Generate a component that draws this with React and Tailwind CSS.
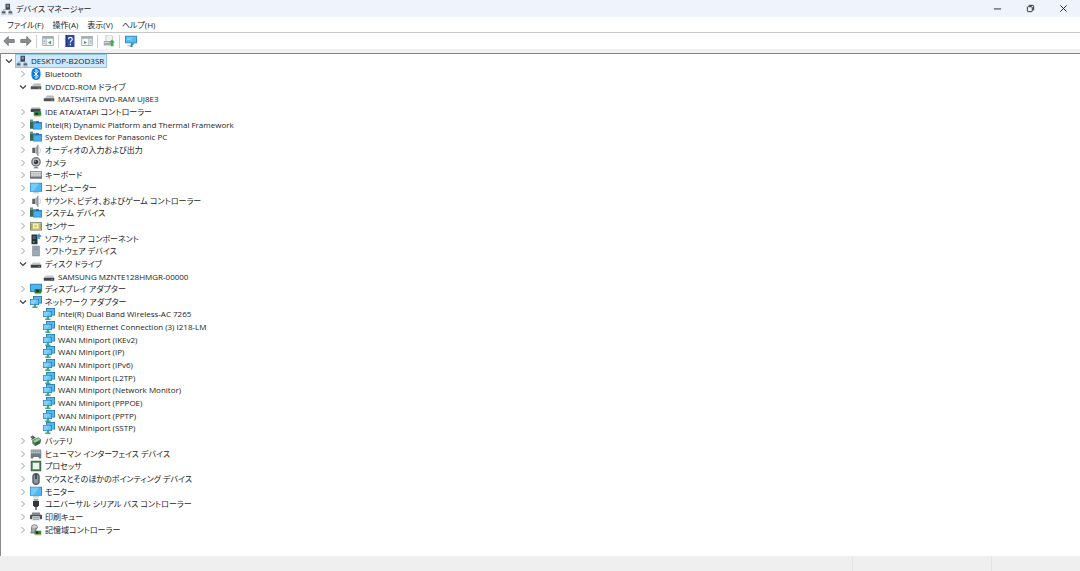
import { useState } from 'react'

// アイコンはすべて 16x16 のグリッドで描く
const ICONS = {
  computer: (
    <>
      <rect x="6" y="1" width="6" height="8" fill="#3c4652" />
      <path d="M7.5 3h3M7.5 5h3" stroke="#c9d3dc" />
      <rect x="1" y="11" width="5" height="3" fill="#56616d" />
      <rect x="10" y="11" width="5" height="3" fill="#56616d" />
      <path d="M3.500 11V9H6M12.500 11V9H10" stroke="#8b959e" fill="none" />
      <path d="M0 15h7M9 15h7" stroke="#a9b2ba" />
    </>
  ),
  bluetooth: (
    <>
      <rect x="2" y="0" width="12" height="16" rx="6" fill="#0a7be0" />
      <path d="M5 5l6 6-3 3V2l3 3-6 6" stroke="#fff" strokeWidth="1.300" fill="none" />
    </>
  ),
  disc: (
    <>
      <path d="M5 4h9l1 3H2z" fill="#c4c6c8" />
      <rect x="1" y="7" width="14" height="4" fill="#505357" />
      <rect x="11" y="9" width="2" height="1" fill="#8ad08a" />
      <path d="M5 4h9" stroke="#9b9da0" />
    </>
  ),
  drive: (
    <>
      <path d="M4 6h9l2 3H1z" fill="#c6c9cb" />
      <rect x="1" y="9" width="14" height="4" fill="#3f4346" />
      <rect x="11" y="11" width="2" height="1" fill="#74c780" />
    </>
  ),
  ide: (
    <>
      <path d="M2 2h11l2 3H1z" fill="#a9adb0" />
      <rect x="1" y="4" width="13" height="4" fill="#45494d" />
      <rect x="5" y="7" width="10" height="6" fill="#2f8a45" />
      <rect x="7" y="9" width="4" height="3" fill="#23352a" />
      <path d="M6 13.500h8" stroke="#c99a35" />
    </>
  ),
  system: (
    <>
      <rect x="0" y="1" width="4" height="12" fill="#35684c" />
      <rect x="0" y="1" width="4" height="3" fill="#6f8b93" />
      <path d="M4 3h5l1 1h6v10H4z" fill="#2289d0" />
      <path d="M5 6h10v7H5z" fill="#46aee9" />
      <path d="M8 3h4v2H8z" fill="#245c8d" />
    </>
  ),
  speaker: (
    <>
      <path d="M3 5h4v7H3z" fill="#5e6367" />
      <path d="M7 5l4-4v15l-4-4z" fill="#a7acb0" />
      <path d="M10.500 1v15" stroke="#72777b" />
      <path d="M13 5c1 2 1 5 0 7" stroke="#b8bcc0" fill="none" />
    </>
  ),
  camera: (
    <>
      <circle cx="8" cy="6.500" r="6.500" fill="#777d82" />
      <circle cx="8" cy="6.500" r="4.500" fill="#c4c8cb" />
      <circle cx="8" cy="6.500" r="3" fill="#33383c" />
      <circle cx="7" cy="5.500" r="1" fill="#9fb4c4" />
      <path d="M4 15c1-2 7-2 8 0z" fill="#555b60" />
    </>
  ),
  keyboard: (
    <>
      <rect x="0" y="3" width="16" height="10" fill="#6e7377" />
      <rect x="1" y="4" width="14" height="6" fill="#d5d8da" />
      <path d="M1 6h14M1 8h14" stroke="#a4a9ad" strokeDasharray="2 1" />
    </>
  ),
  monitor: (
    <>
      <rect x="0" y="1" width="16" height="12" fill="#2a86c7" />
      <path d="M1 2h14v10H1z" fill="#4db8f5" />
      <path d="M1 2h11L5 12H1z" fill="#74ccfb" />
      <path d="M4 14.500h8" stroke="#8fa3b1" />
    </>
  ),
  sensor: (
    <>
      <rect x="0" y="3" width="16" height="11" fill="#6d7550" />
      <rect x="1" y="4" width="14" height="9" fill="#d8d47c" />
      <rect x="4" y="5" width="7" height="6" fill="#f3f0b8" />
      <path d="M2.500 5v7M13.500 5v7M6 8h3" stroke="#798048" />
    </>
  ),
  component: (
    <>
      <rect x="2" y="2" width="8" height="13" fill="#27313a" />
      <path d="M3.500 5h4M3.500 7h4" stroke="#7e8b96" />
      <rect x="4" y="11" width="2" height="2" fill="#4bc263" />
      <path d="M11 1h2v2h2v2h-2v3h-2V5H9V3h2z" fill="#2c8fd6" />
    </>
  ),
  software: (
    <>
      <rect x="3" y="1" width="10" height="14" fill="#7f8d97" />
      <rect x="4" y="2" width="8" height="12" fill="#9caab4" />
      <path d="M5 4h6M5 6h6" stroke="#83919b" />
    </>
  ),
  display: (
    <>
      <rect x="0" y="1" width="16" height="11" fill="#2a7fb9" />
      <rect x="1" y="2" width="14" height="9" fill="#4bb5f0" />
      <rect x="6" y="8" width="9" height="6" fill="#2d7d3f" />
      <rect x="8" y="9" width="4" height="3" fill="#20392a" />
      <path d="M7 14.500h7" stroke="#d3a23a" />
    </>
  ),
  network: (
    <>
      <rect x="4" y="0" width="12" height="10" fill="#2575ad" />
      <rect x="5" y="1" width="10" height="8" fill="#58b8ec" />
      <rect x="0" y="4" width="12" height="8" fill="#2a7fbb" />
      <path d="M1 5h10v6H1z" fill="#62c2f4" />
      <path d="M1 5h8l-4 6H1z" fill="#83d0f8" />
      <path d="M5 12h3v2h2v2H3v-2h2z" fill="#43ad64" />
    </>
  ),
  battery: (
    <>
      <path d="M3 7l8-4 4 3-1 5-7 4-4-4z" fill="#4b8257" />
      <path d="M4 8l7-4 3 2-7 4z" fill="#a3c8a5" />
      <path d="M1 2l3 3M3 1l3 3M2 6l5-3" stroke="#355a3b" strokeWidth="1.500" />
      <path d="M7 11v3l6-3V8z" fill="#2d6138" />
    </>
  ),
  hid: (
    <>
      <rect x="1" y="2" width="14" height="6" fill="#8d9499" />
      <path d="M2 4h12M2 6h12" stroke="#d2d6d9" strokeDasharray="2 1" />
      <path d="M1 14V8h14v6h-3l-1-2H5l-1 2z" fill="#737a80" />
    </>
  ),
  cpu: (
    <>
      <rect x="1" y="1" width="14" height="14" fill="#3e6e4b" />
      <rect x="3" y="3" width="10" height="10" fill="#87ad8c" />
      <rect x="4" y="4" width="8" height="8" fill="#eef2ee" />
    </>
  ),
  mouse: (
    <>
      <rect x="3" y="0" width="10" height="16" rx="5" fill="#596067" />
      <rect x="5" y="2" width="6" height="12" rx="3" fill="#8f979d" />
      <path d="M8 1v7" stroke="#2f353a" strokeWidth="2" />
    </>
  ),
  usb: (
    <>
      <rect x="5" y="1" width="6" height="4" fill="#a6a9ac" />
      <path d="M4 4h8v6l-2 2H6l-2-2z" fill="#33373a" />
      <path d="M8 12v4" stroke="#5b5f63" strokeWidth="2" />
    </>
  ),
  printer: (
    <>
      <path d="M3 2h10l1 3H2z" fill="#7c8288" />
      <rect x="0" y="5" width="16" height="6" rx="1" fill="#4b5157" />
      <rect x="3" y="7" width="10" height="6" fill="#dfe5e8" />
      <path d="M4 9h8M4 11h8" stroke="#5b8b7c" />
    </>
  ),
  storage: (
    <>
      <ellipse cx="6" cy="4" rx="4" ry="3" fill="#d2d5d7" stroke="#5f666b" />
      <path d="M2 5v4l-1 3h7V5" fill="#a3a9ad" stroke="#5f666b" />
      <rect x="6" y="9" width="9" height="5" fill="#2f8a45" />
      <rect x="8" y="10" width="3" height="3" fill="#1f3024" />
      <path d="M7 14.500h8" stroke="#c99a35" />
    </>
  ),
}

const TREE = [
  { icon: 'computer', name: 'DESKTOP-B2OD3SR', depth: 0, open: true },
  { icon: 'bluetooth', name: 'Bluetooth' },
  {
    icon: 'disc',
    name: 'DVD/CD-ROM ドライブ',
    open: true,
    children: ['MATSHITA DVD-RAM UJ8E3'],
  },
  { icon: 'ide', name: 'IDE ATA/ATAPI コントローラー' },
  { icon: 'system', name: 'Intel(R) Dynamic Platform and Thermal Framework' },
  { icon: 'system', name: 'System Devices for Panasonic PC' },
  { icon: 'speaker', name: 'オーディオの入力および出力' },
  { icon: 'camera', name: 'カメラ' },
  { icon: 'keyboard', name: 'キーボード' },
  { icon: 'monitor', name: 'コンピューター' },
  { icon: 'speaker', name: 'サウンド、ビデオ、およびゲーム コントローラー' },
  { icon: 'system', name: 'システム デバイス' },
  { icon: 'sensor', name: 'センサー' },
  { icon: 'component', name: 'ソフトウェア コンポーネント' },
  { icon: 'software', name: 'ソフトウェア デバイス' },
  {
    icon: 'drive',
    name: 'ディスク ドライブ',
    open: true,
    children: ['SAMSUNG MZNTE128HMGR-00000'],
  },
  { icon: 'display', name: 'ディスプレイ アダプター' },
  {
    icon: 'network',
    name: 'ネットワーク アダプター',
    open: true,
    children: [
      'Intel(R) Dual Band Wireless-AC 7265',
      'Intel(R) Ethernet Connection (3) I218-LM',
      'WAN Miniport (IKEv2)',
      'WAN Miniport (IP)',
      'WAN Miniport (IPv6)',
      'WAN Miniport (L2TP)',
      'WAN Miniport (Network Monitor)',
      'WAN Miniport (PPPOE)',
      'WAN Miniport (PPTP)',
      'WAN Miniport (SSTP)',
    ],
  },
  { icon: 'battery', name: 'バッテリ' },
  { icon: 'hid', name: 'ヒューマン インターフェイス デバイス' },
  { icon: 'cpu', name: 'プロセッサ' },
  { icon: 'mouse', name: 'マウスとそのほかのポインティング デバイス' },
  { icon: 'monitor', name: 'モニター' },
  { icon: 'usb', name: 'ユニバーサル シリアル バス コントローラー' },
  { icon: 'printer', name: '印刷キュー' },
  { icon: 'storage', name: '記憶域コントローラー' },
]

const INDENT = ['pl-px', 'pl-[15px]', 'pl-[42px]']

function Icon({ name }) {
  return (
    <svg viewBox="0 0 16 16" className="size-3 shrink-0" aria-hidden="true">
      {ICONS[name]}
    </svg>
  )
}

function Row({ icon, name, depth, open, selected, onSelect, onToggle }) {
  return (
    <li className={`flex items-center min-h-0 ${INDENT[depth]}`}>
      {depth < 2 && (
        <button aria-label={name} aria-expanded={open} onClick={onToggle} className="w-[14px] grid place-items-center">
          <svg viewBox="0 0 8 8" className="size-2" fill="none">
            {open ? (
              <path d="M1 2.500l3 3 3-3" stroke="#404040" strokeWidth="1.200" />
            ) : (
              <path d="M2.500 1l3 3-3 3" stroke="#9a9a9a" />
            )}
          </svg>
        </button>
      )}
      <button
        onClick={onSelect}
        className={`flex items-center gap-[3px] h-3 pr-[2px] whitespace-nowrap ${
          selected ? 'bg-[#cce8ff] outline outline-[#8fc6ec]' : ''
        }`}
      >
        <Icon name={icon} />
        <span>{name}</span>
      </button>
    </li>
  )
}

function ToolButton({ label, children }) {
  return (
    <button aria-label={label} className="grid place-items-center w-[17px] h-4">
      <svg viewBox="0 0 16 16" className="size-3" aria-hidden="true">
        {children}
      </svg>
    </button>
  )
}

function Divider() {
  return <div className="w-px h-[13px] mx-[2px] bg-[#cfcfcf]" />
}

function Pane({ flip }) {
  return (
    <>
      <rect x="1" y="2" width="14" height="12" fill="#f7f9f9" stroke="#8e989c" />
      <rect x="1" y="2" width="14" height="3" fill="#a5adb2" />
      <path d={flip ? 'M10.500 5v9' : 'M5.500 5v9'} stroke="#8e989c" />
      <path d={flip ? 'M4 8l4 2-4 2z' : 'M12 7.500L8 10l4 2.500z'} fill="#4c9a68" />
      <path d={flip ? 'M12 7h2M12 9h2M12 11h2' : 'M2 7h2M2 9h2M2 11h2'} stroke="#6f93a8" />
    </>
  )
}

export default function App() {
  const [selected, setSelected] = useState(TREE[0].name)
  const [closed, setClosed] = useState([])

  const toggle = (name) =>
    setClosed((list) => (list.includes(name) ? list.filter((n) => n !== name) : [...list, name]))

  const rows = []
  TREE.forEach((node) => {
    const open = Boolean(node.open) && !closed.includes(node.name)
    rows.push({ ...node, open, depth: node.depth ?? 1 })
    if (open && node.children) {
      node.children.forEach((name) => rows.push({ name, icon: node.icon, depth: 2 }))
    }
  })

  return (
    <div className="flex flex-col min-h-screen bg-white text-[#1c1c1c] text-[8px] leading-3 font-['Open_Sans','Noto_Sans_CJK_JP',sans-serif] [font-feature-settings:'palt']">
      {/* タイトルバー */}
      <header className="flex items-center h-[17px] pl-px bg-[#eff3fb]">
        <Icon name="computer" />
        <h1 className="ml-[3px] flex-1">デバイス マネージャー</h1>
        <button aria-label="最小化" className="grid place-items-center w-[33px] h-4">
          <svg viewBox="0 0 10 10" className="size-[9px]" stroke="#1c1c1c">
            <path d="M1 5.500h8" />
          </svg>
        </button>
        <button aria-label="元に戻す" className="grid place-items-center w-[33px] h-4">
          <svg viewBox="0 0 10 10" className="size-[9px]" fill="none" stroke="#1c1c1c">
            <rect x="1.500" y="3" width="5.500" height="5.500" rx="1" />
            <path d="M3 1.500h4.500q1 0 1 1V7" />
          </svg>
        </button>
        <button aria-label="閉じる" className="grid place-items-center w-[33px] h-4">
          <svg viewBox="0 0 10 10" className="size-[9px]" stroke="#1c1c1c">
            <path d="M1.500 1.500l7 7M8.500 1.500l-7 7" />
          </svg>
        </button>
      </header>

      {/* メニュー */}
      <nav className="flex items-center gap-[9px] h-4 pl-[7px] border-b border-[#c9c9c9]">
        <button>ファイル(F)</button>
        <button>操作(A)</button>
        <button>表示(V)</button>
        <button>ヘルプ(H)</button>
      </nav>

      {/* ツールバー */}
      <div className="flex items-center h-4">
        <ToolButton label="戻る">
          <path d="M1 8l6-6v4h8v4H7v4z" fill="#8a8d90" stroke="#686b6e" />
        </ToolButton>
        <ToolButton label="進む">
          <path d="M15 8L9 2v4H1v4h8v4z" fill="#8a8d90" stroke="#686b6e" />
        </ToolButton>
        <Divider />
        <ToolButton label="コンソール ツリーの表示">
          <Pane />
        </ToolButton>
        <Divider />
        <ToolButton label="ヘルプ">
          <rect x="2" y="0" width="12" height="16" fill="#2b49a8" />
          <path d="M3 0v16" stroke="#16296b" />
          <path d="M6 5.500c0-3 5-3 5 0 0 2-2.500 2-2.500 4.500M8.500 11.500v2" stroke="#fff" strokeWidth="1.600" fill="none" />
        </ToolButton>
        <ToolButton label="操作ウィンドウの表示">
          <Pane flip />
        </ToolButton>
        <Divider />
        <ToolButton label="ハードウェア変更のスキャン">
          <path d="M4 0h7l2 2v9H4z" fill="#f2f3f3" stroke="#b3b8ba" />
          <path d="M1 8h9v6H1z" fill="#a5abae" />
          <path d="M2 10h7" stroke="#dde0e1" />
          <path d="M12 6l4 4h-2v5h-4v-5H8z" fill="#48a85b" />
        </ToolButton>
        <Divider />
        <ToolButton label="デバイスの追加">
          <rect x="0" y="1" width="16" height="10" fill="#2d84bd" />
          <rect x="1" y="2" width="14" height="8" fill="#58baf0" />
          <path d="M3 4h7M3 6h5" stroke="#a5dcf8" />
          <path d="M8 11h5l-3 3v2H7z" fill="#3a7fae" />
          <path d="M3 14.500h5" stroke="#8fa0ab" />
        </ToolButton>
      </div>
      <div className="h-[5px] bg-[#eff0f0] border-b border-[#828484]" />

      {/* デバイス ツリー */}
      <main className="flex flex-col flex-1 pt-px pb-5 border-l border-[#8a8a8a]">
        <ul className="grid flex-1 auto-rows-fr">
          {rows.map((row) => (
            <Row
              key={row.name}
              {...row}
              selected={row.name === selected}
              onSelect={() => setSelected(row.name)}
              onToggle={() => toggle(row.name)}
            />
          ))}
        </ul>
      </main>

      <footer className="flex justify-end h-[15px] bg-[#efefef]">
        <div className="w-[139px] border-l border-[#e4e4e4]" />
        <div className="w-[89px] border-l border-[#e4e4e4]" />
      </footer>
    </div>
  )
}
